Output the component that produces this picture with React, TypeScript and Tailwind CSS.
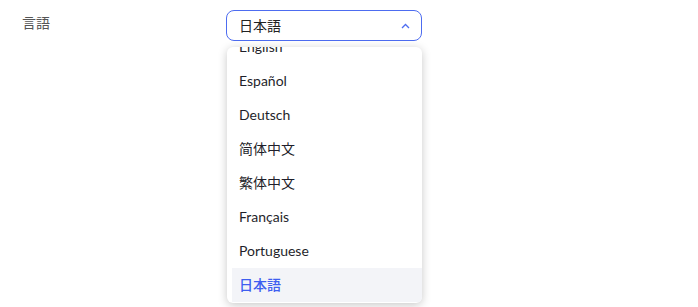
const languages = ['English', 'Español', 'Deutsch', '简体中文', '繁体中文', 'Français', 'Portuguese', '日本語'];

export default function App() {
  const selected = '日本語';

  return (
    <div className="w-[698px] h-[307px] bg-white overflow-hidden font-['Lato','Noto_Sans_CJK_JP',sans-serif]">
      <div className="flex pl-[22px] pt-[10px]">
        <div className="w-[204px] pt-[5px] text-[14px] leading-[16px] text-[#555]">言語</div>

        {/* Select */}
        <div className="relative w-[196px]">
          <div className="h-[31px] rounded-[8px] border border-[#4d6cf0] flex items-center justify-between pl-[12px] pr-[10px]">
            <span className="text-[14px] text-[#222]">{selected}</span>
            <svg width="9" height="6" viewBox="0 0 9 6" className="mr-[1px]">
              <path d="M1 5 L4.5 1.5 L8 5" fill="none" stroke="#4d6cf0" strokeWidth="1.3" />
            </svg>
          </div>

          {/* Dropdown menu */}
          <div className="absolute left-[1px] top-[37px] w-[195px] h-[256px] bg-white rounded-[6px] shadow-[0_2px_10px_rgba(0,0,0,0.22)] overflow-hidden">
            <ul className="-mt-[17px] pl-[5px]">
              {languages.map((lang) => (
                <li
                  key={lang}
                  className={`h-[34px] flex items-center pl-[7px] pb-[1px] text-[14px] ${
                    lang === selected ? 'bg-[#f3f4f8] text-[#3e5ef0] font-medium' : 'text-[#1f1f2b]'
                  }`}
                >
                  {lang}
                </li>
              ))}
            </ul>
          </div>
        </div>
      </div>
    </div>
  );
}
